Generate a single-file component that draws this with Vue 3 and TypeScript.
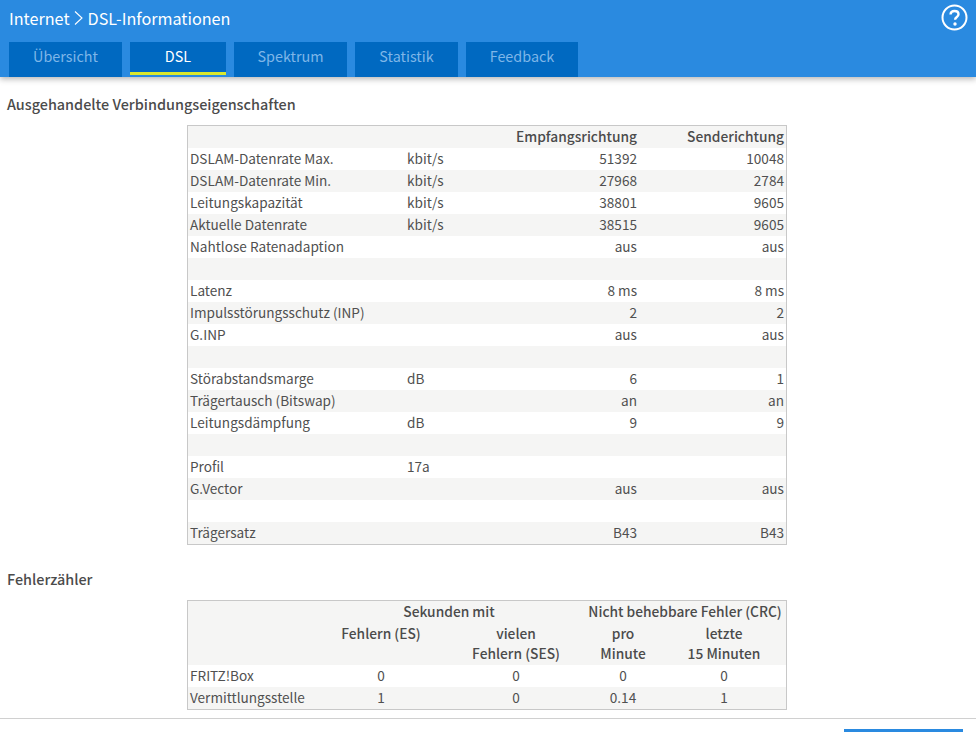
<script setup lang="ts">
interface Row { label: string; unit: string; rx: string; tx: string }
const rows: Row[] = [
  { label: 'DSLAM-Datenrate Max.', unit: 'kbit/s', rx: '51392', tx: '10048' },
  { label: 'DSLAM-Datenrate Min.', unit: 'kbit/s', rx: '27968', tx: '2784' },
  { label: 'Leitungskapazität', unit: 'kbit/s', rx: '38801', tx: '9605' },
  { label: 'Aktuelle Datenrate', unit: 'kbit/s', rx: '38515', tx: '9605' },
  { label: 'Nahtlose Ratenadaption', unit: '', rx: 'aus', tx: 'aus' },
  { label: '', unit: '', rx: '', tx: '' },
  { label: 'Latenz', unit: '', rx: '8 ms', tx: '8 ms' },
  { label: 'Impulsstörungsschutz (INP)', unit: '', rx: '2', tx: '2' },
  { label: 'G.INP', unit: '', rx: 'aus', tx: 'aus' },
  { label: '', unit: '', rx: '', tx: '' },
  { label: 'Störabstandsmarge', unit: 'dB', rx: '6', tx: '1' },
  { label: 'Trägertausch (Bitswap)', unit: '', rx: 'an', tx: 'an' },
  { label: 'Leitungsdämpfung', unit: 'dB', rx: '9', tx: '9' },
  { label: '', unit: '', rx: '', tx: '' },
  { label: 'Profil', unit: '17a', rx: '', tx: '' },
  { label: 'G.Vector', unit: '', rx: 'aus', tx: 'aus' },
  { label: '', unit: '', rx: '', tx: '' },
  { label: 'Trägersatz', unit: '', rx: 'B43', tx: 'B43' },
]
const tabs = ['Übersicht', 'DSL', 'Spektrum', 'Statistik', 'Feedback']
const tabWidths = [113, 96, 113, 103, 112]
const errors = [
  { name: 'FRITZ!Box', cells: ['0', '0', '0', '0'] },
  { name: 'Vermittlungsstelle', cells: ['1', '0', '0.14', '1'] },
]
</script>

<template>
  <div class="page">
    <header class="top">
      <div class="title-row">
        <h1 class="title">
          <span>Internet</span>
          <svg class="chev" width="9" height="14" viewBox="0 0 9 14">
            <path d="M1 .5l7 6.500-7 6.500" fill="none" stroke="#fff" stroke-width="1.100" />
          </svg>
          <span>DSL-Informationen</span>
        </h1>
        <svg class="help" width="27" height="27" viewBox="0 0 27 27">
          <circle cx="13.500" cy="13.500" r="12" fill="none" stroke="#fff" stroke-width="2" />
          <path d="M9.500 10.500c.2-2.300 1.800-3.500 4-3.500 2.400 0 4 1.300 4 3.200 0 1.500-.8 2.300-1.900 3.100-1 .7-1.500 1.200-1.500 2.500" fill="none" stroke="#fff" stroke-width="2.400" />
          <circle cx="14" cy="20" r="1.700" fill="#fff" />
        </svg>
      </div>
      <nav class="tabs">
        <a
          v-for="(t, i) in tabs"
          :key="t"
          class="tab"
          :class="{ active: t === 'DSL' }"
          :style="{ width: tabWidths[i] + 'px' }"
        >{{ t }}</a>
      </nav>
    </header>

    <main class="content">
      <h2 class="heading">Ausgehandelte Verbindungseigenschaften</h2>
      <table class="grid props">
        <colgroup>
          <col style="width: 217px" />
          <col style="width: 100px" />
          <col style="width: 134px" />
          <col style="width: 147px" />
        </colgroup>
        <thead>
          <tr>
            <th></th>
            <th></th>
            <th class="r">Empfangsrichtung</th>
            <th class="r">Senderichtung</th>
          </tr>
        </thead>
        <tbody>
          <tr v-for="(row, i) in rows" :key="i">
            <td>{{ row.label }}</td>
            <td>{{ row.unit }}</td>
            <td class="r">{{ row.rx }}</td>
            <td class="r">{{ row.tx }}</td>
          </tr>
        </tbody>
      </table>

      <h2 class="heading second">Fehlerzähler</h2>
      <table class="grid errs">
        <colgroup>
          <col style="width: 126px" />
          <col style="width: 134px" />
          <col style="width: 136px" />
          <col style="width: 78px" />
          <col style="width: 124px" />
        </colgroup>
        <thead>
          <tr>
            <th></th>
            <th colspan="2" class="c">Sekunden mit</th>
            <th colspan="2" class="c">Nicht behebbare Fehler (CRC)</th>
          </tr>
          <tr class="sub">
            <th></th>
            <th class="c">Fehlern (ES)</th>
            <th class="c">vielen<br />Fehlern (SES)</th>
            <th class="c">pro<br />Minute</th>
            <th class="c">letzte<br />15 Minuten</th>
          </tr>
        </thead>
        <tbody>
          <tr v-for="e in errors" :key="e.name">
            <td>{{ e.name }}</td>
            <td v-for="(c, i) in e.cells" :key="i" class="c">{{ c }}</td>
          </tr>
        </tbody>
      </table>
    </main>

    <footer class="foot">
      <button class="btn" type="button"></button>
    </footer>
  </div>
</template>

<style>
html, body { margin: 0; background: #fff; overflow: hidden; }
</style>

<style scoped>
.page {
  width: 976px;
  height: 732px;
  overflow: hidden;
  font-family: "Noto Sans CJK SC", "Noto Sans", sans-serif;
  font-size: 13.6px;
  color: #505050;
}
.top {
  height: 77px;
  background: #2a8ae0;
  box-shadow: 0 2px 6px rgba(0, 0, 0, 0.3);
  display: flex;
  flex-direction: column;
  justify-content: space-between;
  position: relative;
}
.title-row {
  display: flex;
  justify-content: space-between;
  padding: 4px 9px 0 9px;
  height: 38px;
  box-sizing: border-box;
}
.title {
  margin: 0;
  display: flex;
  align-items: center;
  gap: 4.500px;
  height: 28px;
  font-size: 16.200px;
  font-weight: 400;
  color: #fff;
  line-height: 28px;
}
.help { margin-right: -0.500px; }
.tabs {
  display: flex;
  gap: 8px;
  padding-left: 9px;
}
.tab {
  height: 35px;
  box-sizing: border-box;
  background: #0069c1;
  color: #7eb6e8;
  text-align: center;
  line-height: 28px;
  font-size: 14.400px;
}
.tab.active {
  color: #fff;
  border-bottom: 3px solid #d9e82e;
  height: 33px;
}
.content { padding: 0 0 0 7px; }
.heading {
  margin: 0;
  padding-top: 16px;
  font-size: 14.400px;
  font-weight: 500;
  line-height: 22px;
  height: 32px;
  color: #4b4b4b;
}
.heading.second { padding-top: 23px; height: 32px; }
.grid {
  border-collapse: separate;
  border-spacing: 0;
  table-layout: fixed;
  width: 600px;
  margin-left: 180px;
  border: 1px solid #c8c8c8;
  line-height: 21px;
}
.grid th, .grid td {
  padding: 0 2px;
  height: 22px;
  box-sizing: border-box;
  font-weight: 400;
  white-space: nowrap;
  vertical-align: top;
}
.grid th { font-size: 13.750px; font-weight: 500; background: #f5f5f4; color: #4b4b4b; }
.grid .sub th { line-height: 20px; height: 42px; }
.grid tbody tr:nth-child(odd) td { background: #fff; }
.grid tbody tr:nth-child(even) td { background: #f5f5f4; }
.r { text-align: right; }
.c { text-align: center; }
.foot {
  position: absolute;
  top: 718px;
  left: 0;
  width: 976px;
  border-top: 1px solid #d0d0d0;
}
.btn {
  position: absolute;
  top: 10px;
  left: 844px;
  width: 119px;
  height: 30px;
  border: 0;
  background: #2a8ae0;
  padding: 0;
}
</style>
